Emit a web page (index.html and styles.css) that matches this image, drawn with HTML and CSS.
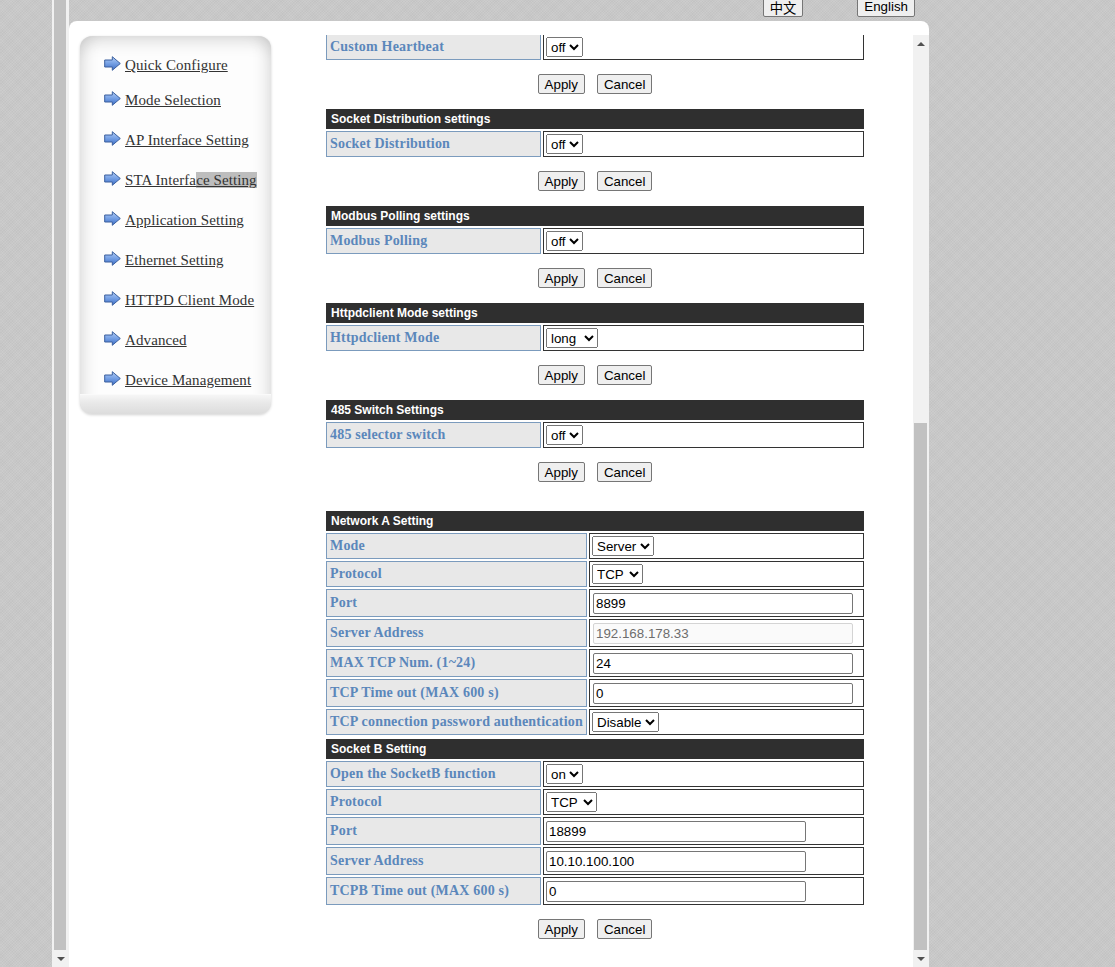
FILE: index.html
```html
<!DOCTYPE html>
<html>
<head>
<meta charset="utf-8">
<title>Settings</title>
<link rel="stylesheet" href="styles.css">
</head>
<body>
<div class="page">
  <div class="outer-scroll">
    <div class="outer-thumb"></div>
    <div class="sb-btn"><span class="tri-down"></span></div>
  </div>
  <div class="main">
    <div class="langbar">
      <button class="lang">中文</button>
      <button class="lang">English</button>
    </div>
    <div class="panel">
      <nav class="sidebar">
        <ul class="menu">
          <li><svg class="ico" width="17" height="15" viewBox="0 0 17 15"><defs><linearGradient id="ag" x1="0" y1="0" x2="0" y2="1"><stop offset="0" stop-color="#b3cdf5"/><stop offset="0.45" stop-color="#7aa4e6"/><stop offset="1" stop-color="#3e6ec6"/></linearGradient></defs><path d="M0.7 4 H8.3 V0.7 L16.3 7.5 L8.3 14.3 V11 H0.7 Z" fill="url(#ag)" stroke="#3a5f9e" stroke-width="1" stroke-linejoin="round"/></svg><a href="#">Quick Configure</a></li>
          <li><svg class="ico" width="17" height="15" viewBox="0 0 17 15"><path d="M0.7 4 H8.3 V0.7 L16.3 7.5 L8.3 14.3 V11 H0.7 Z" fill="url(#ag)" stroke="#3a5f9e" stroke-width="1" stroke-linejoin="round"/></svg><a href="#">Mode Selection</a></li>
          <li><svg class="ico" width="17" height="15" viewBox="0 0 17 15"><path d="M0.7 4 H8.3 V0.7 L16.3 7.5 L8.3 14.3 V11 H0.7 Z" fill="url(#ag)" stroke="#3a5f9e" stroke-width="1" stroke-linejoin="round"/></svg><a href="#">AP Interface Setting</a></li>
          <li><svg class="ico" width="17" height="15" viewBox="0 0 17 15"><path d="M0.7 4 H8.3 V0.7 L16.3 7.5 L8.3 14.3 V11 H0.7 Z" fill="url(#ag)" stroke="#3a5f9e" stroke-width="1" stroke-linejoin="round"/></svg><a href="#">STA Interfa<span class="sel">ce Setting</span></a></li>
          <li><svg class="ico" width="17" height="15" viewBox="0 0 17 15"><path d="M0.7 4 H8.3 V0.7 L16.3 7.5 L8.3 14.3 V11 H0.7 Z" fill="url(#ag)" stroke="#3a5f9e" stroke-width="1" stroke-linejoin="round"/></svg><a href="#">Application Setting</a></li>
          <li><svg class="ico" width="17" height="15" viewBox="0 0 17 15"><path d="M0.7 4 H8.3 V0.7 L16.3 7.5 L8.3 14.3 V11 H0.7 Z" fill="url(#ag)" stroke="#3a5f9e" stroke-width="1" stroke-linejoin="round"/></svg><a href="#">Ethernet Setting</a></li>
          <li><svg class="ico" width="17" height="15" viewBox="0 0 17 15"><path d="M0.7 4 H8.3 V0.7 L16.3 7.5 L8.3 14.3 V11 H0.7 Z" fill="url(#ag)" stroke="#3a5f9e" stroke-width="1" stroke-linejoin="round"/></svg><a href="#">HTTPD Client Mode</a></li>
          <li><svg class="ico" width="17" height="15" viewBox="0 0 17 15"><path d="M0.7 4 H8.3 V0.7 L16.3 7.5 L8.3 14.3 V11 H0.7 Z" fill="url(#ag)" stroke="#3a5f9e" stroke-width="1" stroke-linejoin="round"/></svg><a href="#">Advanced</a></li>
          <li><svg class="ico" width="17" height="15" viewBox="0 0 17 15"><path d="M0.7 4 H8.3 V0.7 L16.3 7.5 L8.3 14.3 V11 H0.7 Z" fill="url(#ag)" stroke="#3a5f9e" stroke-width="1" stroke-linejoin="round"/></svg><a href="#">Device Management</a></li>
        </ul>
        <div class="sidebar-foot"></div>
      </nav>
      <div class="frame">
        <div class="frame-content">
          <div class="form">
            <div class="row first">
              <div class="label">Custom Heartbeat</div>
              <div class="value"><select><option>off</option><option>on</option></select></div>
            </div>
            <div class="actions"><button>Apply</button><button>Cancel</button></div>

            <div class="head">Socket Distribution settings</div>
            <div class="row">
              <div class="label">Socket Distribution</div>
              <div class="value"><select><option>off</option><option>on</option></select></div>
            </div>
            <div class="actions"><button>Apply</button><button>Cancel</button></div>

            <div class="head">Modbus Polling settings</div>
            <div class="row">
              <div class="label">Modbus Polling</div>
              <div class="value"><select><option>off</option><option>on</option></select></div>
            </div>
            <div class="actions"><button>Apply</button><button>Cancel</button></div>

            <div class="head">Httpdclient Mode settings</div>
            <div class="row">
              <div class="label">Httpdclient Mode</div>
              <div class="value"><select><option>long</option><option>short</option></select></div>
            </div>
            <div class="actions"><button>Apply</button><button>Cancel</button></div>

            <div class="head">485 Switch Settings</div>
            <div class="row">
              <div class="label">485 selector switch</div>
              <div class="value"><select><option>off</option><option>on</option></select></div>
            </div>
            <div class="actions"><button>Apply</button><button>Cancel</button></div>

            <div class="head neta-head">Network A Setting</div>
            <div class="row wide">
              <div class="label">Mode</div>
              <div class="value"><select><option>Server</option><option>Client</option></select></div>
            </div>
            <div class="row wide">
              <div class="label">Protocol</div>
              <div class="value"><select><option>TCP</option><option>UDP</option></select></div>
            </div>
            <div class="row wide tall">
              <div class="label">Port</div>
              <div class="value"><input type="text" value="8899"></div>
            </div>
            <div class="row wide tall">
              <div class="label">Server Address</div>
              <div class="value"><input type="text" value="192.168.178.33" disabled></div>
            </div>
            <div class="row wide tall">
              <div class="label">MAX TCP Num. (1~24)</div>
              <div class="value"><input type="text" value="24"></div>
            </div>
            <div class="row wide tall">
              <div class="label">TCP Time out (MAX 600 s)</div>
              <div class="value"><input type="text" value="0"></div>
            </div>
            <div class="row wide">
              <div class="label">TCP connection password authentication</div>
              <div class="value"><select><option>Disable</option><option>Enable</option></select></div>
            </div>

            <div class="head sockb-head">Socket B Setting</div>
            <div class="row">
              <div class="label">Open the SocketB function</div>
              <div class="value"><select><option>on</option><option>off</option></select></div>
            </div>
            <div class="row">
              <div class="label">Protocol</div>
              <div class="value"><select><option>TCP</option><option>UDP</option></select></div>
            </div>
            <div class="row tall">
              <div class="label">Port</div>
              <div class="value"><input type="text" value="18899"></div>
            </div>
            <div class="row tall">
              <div class="label">Server Address</div>
              <div class="value"><input type="text" value="10.10.100.100"></div>
            </div>
            <div class="row tall">
              <div class="label">TCPB Time out (MAX 600 s)</div>
              <div class="value"><input type="text" value="0"></div>
            </div>
            <div class="actions"><button>Apply</button><button>Cancel</button></div>
          </div>
        </div>
        <div class="inner-scroll">
          <div class="sb-btn"><span class="tri-up"></span></div>
          <div class="sb-gap"></div>
          <div class="inner-thumb"></div>
          <div class="sb-btn"><span class="tri-down"></span></div>
        </div>
      </div>
    </div>
  </div>
</div>
</body>
</html>
```

FILE: styles.css
```css
* { box-sizing: border-box; }

html, body {
  margin: 0;
  padding: 0;
  height: 100%;
}

body {
  background-color: #c8c8c8;
  background-image:
    repeating-linear-gradient(45deg, rgba(255,255,255,0.07) 0 1px, transparent 1px 2px),
    repeating-linear-gradient(-45deg, rgba(0,0,0,0.025) 0 1px, transparent 1px 2px);
  font-family: "Liberation Sans", Arial, sans-serif;
  overflow: hidden;
}

.page {
  display: flex;
  height: 967px;
  padding-left: 52px;
  overflow: hidden;
}

/* outer (left) scrollbar strip */
.outer-scroll {
  width: 17px;
  height: 100%;
  background: #f1f1f1;
  display: flex;
  flex-direction: column;
}
.outer-thumb {
  flex: 1;
  margin: 0 3px 0 2px;
  background: #c1c1c1;
}

.sb-btn {
  height: 17px;
  display: flex;
  align-items: center;
  justify-content: center;
}
.tri-down {
  width: 0; height: 0;
  border-left: 4px solid transparent;
  border-right: 4px solid transparent;
  border-top: 4px solid #505050;
}
.tri-up {
  width: 0; height: 0;
  border-left: 4px solid transparent;
  border-right: 4px solid transparent;
  border-bottom: 4px solid #505050;
}

.main {
  width: 860px;
  display: flex;
  flex-direction: column;
}

.langbar {
  height: 21px;
  display: flex;
  justify-content: flex-end;
  gap: 54px;
  padding-right: 14px;
}
.lang {
  margin-top: -4px;
  height: 21px;
  font-family: "Liberation Sans", "Noto Sans CJK SC", Arial, sans-serif;
  font-size: 13.333px;
  padding: 1px 6px;
  border: 1px solid #767676;
  border-radius: 2px;
  background: #efefef;
  color: #000;
}

.panel {
  flex: 1;
  background: #fff;
  border-radius: 8px 8px 0 0;
  display: flex;
  padding-top: 14px;
  min-height: 0;
}

/* left navigation */
.sidebar {
  margin-left: 11px;
  margin-top: 1px;
  width: 191px;
  height: 378px;
  border-radius: 12px;
  background: #fdfdfd;
  box-shadow:
    inset 0 14px 16px -8px rgba(0,0,0,0.13),
    inset 14px 0 16px -10px rgba(0,0,0,0.12),
    inset -14px 0 16px -10px rgba(0,0,0,0.12),
    0 1px 3px rgba(0,0,0,0.18);
  display: flex;
  flex-direction: column;
  overflow: hidden;
}
.menu {
  list-style: none;
  margin: 0;
  padding: 19px 0 0 24px;
  display: flex;
  flex-direction: column;
  gap: 20px;
}
.menu li {
  height: 20px;
  display: flex;
  align-items: center;
  gap: 4px;
  white-space: nowrap;
}
.menu li:first-child { margin-bottom: -5px; }
.ico { flex: none; margin-top: -3px; }
.menu a {
  font-family: "Liberation Serif", "Times New Roman", serif;
  font-size: 15px;
  letter-spacing: 0.1px;
  color: #333;
  text-decoration: underline;
  line-height: 20px;
}
.menu .sel { background: #bdbdbd; }
.sidebar-foot {
  margin-top: auto;
  height: 20px;
  background: linear-gradient(to bottom, #f6f6f6 0, #e9e9e9 40%, #dcdcdc 100%);
  border-top: 1px solid #fafafa;
}

/* right frame */
.frame {
  flex: 1;
  margin-left: 5px;
  display: flex;
  min-height: 0;
}
.frame-content {
  flex: 1;
  overflow: hidden;
  padding-left: 50px;
}
.form {
  width: 538px;
  margin-top: -1px;
  display: flex;
  flex-direction: column;
}

.head {
  height: 20px;
  margin-top: 15px;
  background: #2f2f2f;
  color: #fff;
  font-family: "Liberation Sans", Arial, sans-serif;
  font-weight: bold;
  font-size: 12px;
  line-height: 20px;
  padding-left: 5px;
}
.neta-head { margin-top: 29px; }
.sockb-head { margin-top: 4px; }

.row {
  display: flex;
  gap: 2px;
  height: 26px;
  margin-top: 2px;
}
.row.first { margin-top: 0; }
.row.tall { height: 28px; }

.label {
  width: 215px;
  flex: none;
  background: #e8e8e8;
  border: 1px solid #7b9bbd;
  display: flex;
  align-items: center;
  padding-left: 3px;
  font-family: "Liberation Serif", "Times New Roman", serif;
  font-weight: bold;
  font-size: 14px;
  letter-spacing: 0.2px;
  color: #5b87bb;
  white-space: nowrap;
}
.row.wide .label { width: 261px; }

.value {
  flex: 1;
  border: 1px solid #333;
  display: flex;
  align-items: center;
  padding-left: 2px;
}
.row.wide.tall .value { padding-left: 3px; }

select {
  font-family: "Liberation Sans", Arial, sans-serif;
  font-size: 13.333px;
  color: #000;
  height: 20px;
}

input[type="text"] {
  width: 260px;
  height: 21px;
  font-family: "Liberation Sans", Arial, sans-serif;
  font-size: 13.333px;
  padding: 1px 2px;
  border: 1px solid #767676;
  border-radius: 2px;
  color: #000;
  background: #fff;
}
input[type="text"]:disabled {
  background: #fafafa;
  border-color: #d4d4d4;
  color: #6d6d6d;
}

.actions {
  display: flex;
  justify-content: center;
  gap: 12px;
  margin-top: 14px;
  height: 20px;
}
.actions button {
  height: 20px;
  font-family: "Liberation Sans", Arial, sans-serif;
  font-size: 13.333px;
  padding: 0 6px;
  border: 1px solid #767676;
  border-radius: 2px;
  background: #efefef;
  color: #000;
}

/* inner scrollbar */
.inner-scroll {
  width: 16px;
  background: #f1f1f1;
  display: flex;
  flex-direction: column;
}
.sb-gap { height: 371px; }
.inner-thumb {
  flex: 1;
  margin: 0 2px 0 1px;
  background: #c1c1c1;
}
```
